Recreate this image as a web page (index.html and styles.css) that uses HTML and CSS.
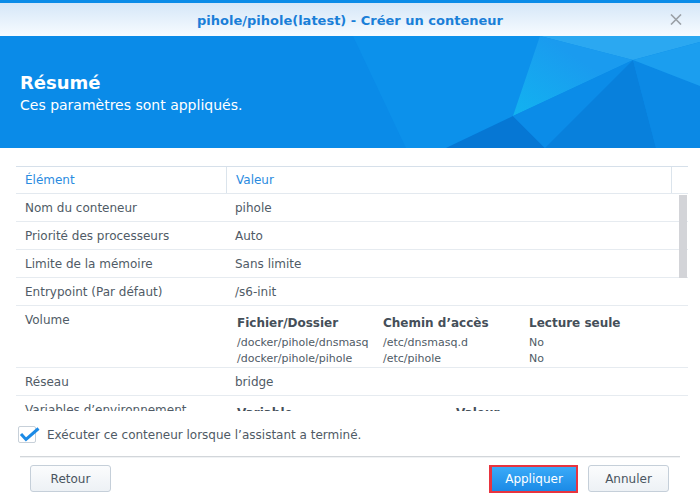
FILE: index.html
```html
<!DOCTYPE html>
<html lang="fr">
<head>
<meta charset="utf-8">
<title>Créer un conteneur</title>
<link rel="stylesheet" href="styles.css">
</head>
<body>
<div class="window">
  <div class="titlebar">
    <span class="title">pihole/pihole(latest) - Créer un conteneur</span>
    <span class="close" aria-label="Fermer">
      <svg width="12" height="11" viewBox="0 0 12 11"><path d="M1 0.5 L11 10.5 M11 0.5 L1 10.5" stroke="#9aa0a6" stroke-width="1.6" fill="none"/></svg>
    </span>
  </div>

  <div class="banner">
    <svg class="banner-art" width="700" height="112" viewBox="0 0 700 112" preserveAspectRatio="none">
      <defs>
        <linearGradient id="hl" x1="560" y1="10" x2="513" y2="80" gradientUnits="userSpaceOnUse">
          <stop offset="0" stop-color="#1a9bef"/>
          <stop offset="1" stop-color="#12b3f0"/>
        </linearGradient>
      </defs>
      <polygon points="353,0 540,0 633,24 513,80 446,112 406,112" fill="#0c91eb"/>
      <polygon points="540,0 700,0 700,6 633,24" fill="#2ba8f1"/>
      <polygon points="540,0 633,24 513,80" fill="url(#hl)"/>
      <polygon points="446,112 513,80 545,112" fill="#0677d4"/>
      <polygon points="513,80 633,24 545,112" fill="#0b8ce8"/>
      <polygon points="633,24 656,112 545,112" fill="#0880dc"/>
      <polygon points="633,24 700,50 700,112 656,112" fill="#0b89e5"/>
      <polygon points="633,24 700,6 700,50" fill="#1b9eef"/>
    </svg>
    <div class="banner-text">
      <h1>Résumé</h1>
      <p>Ces paramètres sont appliqués.</p>
    </div>
  </div>

  <div class="content">
    <div class="grid">
      <div class="grid-head">
        <div class="hcell">Élément</div>
        <div class="hcell hsep">Valeur</div>
        <div class="hcell hsep"></div>
      </div>
      <div class="grid-body">
        <div class="row"><div class="cell">Nom du conteneur</div><div class="cell">pihole</div></div>
        <div class="row"><div class="cell">Priorité des processeurs</div><div class="cell">Auto</div></div>
        <div class="row"><div class="cell">Limite de la mémoire</div><div class="cell">Sans limite</div></div>
        <div class="row"><div class="cell">Entrypoint (Par défaut)</div><div class="cell">/s6-init</div></div>
        <div class="row"><div class="cell">Volume</div>
          <div class="cell sub">
            <div class="subgrid vol">
              <div class="sh">Fichier/Dossier</div><div class="sh">Chemin d’accès</div><div class="sh">Lecture seule</div>
            </div>
            <div class="subgrid vol data">
              <div>/docker/pihole/dnsmasq</div><div>/etc/dnsmasq.d</div><div>No</div>
              <div>/docker/pihole/pihole</div><div>/etc/pihole</div><div>No</div>
            </div>
          </div>
        </div>
        <div class="row"><div class="cell">Réseau</div><div class="cell">bridge</div></div>
        <div class="row"><div class="cell">Variables d’environnement</div>
          <div class="cell sub">
            <div class="subgrid env">
              <div class="sh">Variable</div><div class="sh">Valeur</div>
            </div>
            <div class="subgrid env data">
              <div>PATH</div><div>/usr/local/sbin:/usr/local/bin</div>
            </div>
          </div>
        </div>
        <div class="scrollbar"></div>
      </div>
    </div>

    <label class="check">
      <span class="box">
        <svg width="21" height="17" viewBox="0 0 21 17"><path d="M2 7 L7 12.5 L19.5 1.5" stroke="#1b8ae6" stroke-width="3" fill="none" stroke-linejoin="miter"/></svg>
      </span>
      <span>Exécuter ce conteneur lorsque l’assistant a terminé.</span>
    </label>
  </div>

  <div class="separator"></div>

  <div class="footer">
    <button class="btn">Retour</button>
    <div class="actions">
      <button class="btn primary">Appliquer</button>
      <button class="btn">Annuler</button>
    </div>
  </div>
</div>
</body>
</html>
```
FILE: styles.css
```css
* { box-sizing: border-box; }
html, body { margin: 0; padding: 0; }
body {
  width: 700px;
  height: 500px;
  overflow: hidden;
  background: #ffffff;
  font-family: "DejaVu Sans", Verdana, sans-serif;
  font-size: 12px;
  color: #505b66;
}

.titlebar {
  height: 36px;
  border-top: 3px solid #0a8ce8;
  background: linear-gradient(#d5e7f8, #f7fbff);
  display: grid;
  grid-template-columns: 1fr auto 1fr;
  align-items: center;
}
.title {
  grid-column: 2;
  font-weight: bold;
  font-size: 13px;
  color: #1a7fd8;
  padding-top: 1px;
}
.close {
  grid-column: 3;
  justify-self: end;
  margin-right: 18px;
  display: flex;
  margin-top: 0;
}

.banner {
  height: 112px;
  background: #0a8be8;
  display: grid;
  overflow: hidden;
}
.banner-art { grid-area: 1 / 1; display: block; }
.banner-text {
  grid-area: 1 / 1;
  padding: 36px 20px 0;
  color: #ffffff;
}
.banner-text h1 {
  margin: 0;
  font-size: 18px;
  line-height: 22px;
  font-weight: bold;
}
.banner-text p {
  margin: 2px 0 0;
  font-size: 14px;
  line-height: 18px;
}

.content { padding: 18px 12px 0 16px; }

.grid { width: 672px; }
.grid-head {
  display: grid;
  grid-template-columns: 210px 445px 17px;
  height: 28px;
  border-top: 1px solid #d6e0ea;
  border-bottom: 1px solid #e3e9ef;
}
.hcell {
  padding: 6px 9px 0;
  line-height: 14px;
  color: #2a8be0;
}
.hsep { border-left: 1px solid #dbe4ec; }

.grid-body {
  height: 217px;
  overflow: hidden;
  position: relative;
}
.row {
  display: grid;
  grid-template-columns: 210px 1fr;
  border-bottom: 1px solid #e6ebf0;
}
.cell {
  padding: 7px 9px 6px;
  line-height: 14px;
}
.cell.sub { padding: 9px 0 0 11px; }
.subgrid { display: grid; }
.subgrid.vol { grid-template-columns: 146px 146px 1fr; }
.subgrid.env { grid-template-columns: 219px 1fr; }
.sh {
  font-weight: bold;
  color: #454f59;
  line-height: 16px;
}
.subgrid.data {
  margin-top: 4px;
  font-size: 11px;
  line-height: 16px;
}

.scrollbar {
  position: absolute;
  top: 1px;
  right: 1px;
  width: 8px;
  height: 83px;
  background: #d3d4d8;
}

.check {
  margin-top: 15px;
  padding-left: 2px;
  display: flex;
  align-items: center;
  gap: 11px;
  height: 17px;
  color: #4f5a65;
}
.box {
  width: 18px;
  height: 17px;
  border: 1px solid #c7d0d9;
  border-radius: 2px;
  background: #fff;
  position: relative;
  display: flex;
}
.box svg { position: absolute; left: 0; top: 0; overflow: visible; }

.separator {
  margin: 13px 20px 0;
  height: 2px;
  border-top: 1px solid #d2d6da;
  background: #f0f2f4;
}

.footer {
  display: flex;
  justify-content: space-between;
  align-items: flex-start;
  padding: 7px 31px 0 30px;
}
.actions { display: flex; gap: 10px; align-items: flex-start; }
.btn {
  width: 81px;
  height: 27px;
  border: 1px solid #c5cfd9;
  border-radius: 3px;
  background: linear-gradient(#fbfcfd, #edf1f5);
  font-family: "DejaVu Sans", Verdana, sans-serif;
  font-size: 12px;
  color: #4a5560;
  padding: 0;
}
.btn.primary {
  width: 89px;
  height: 28px;
  border: 2px solid #e8343f;
  border-left-width: 3px;
  border-radius: 0;
  background: linear-gradient(#3aaaf8, #1b8ae6);
  color: #ffffff;
}
```
